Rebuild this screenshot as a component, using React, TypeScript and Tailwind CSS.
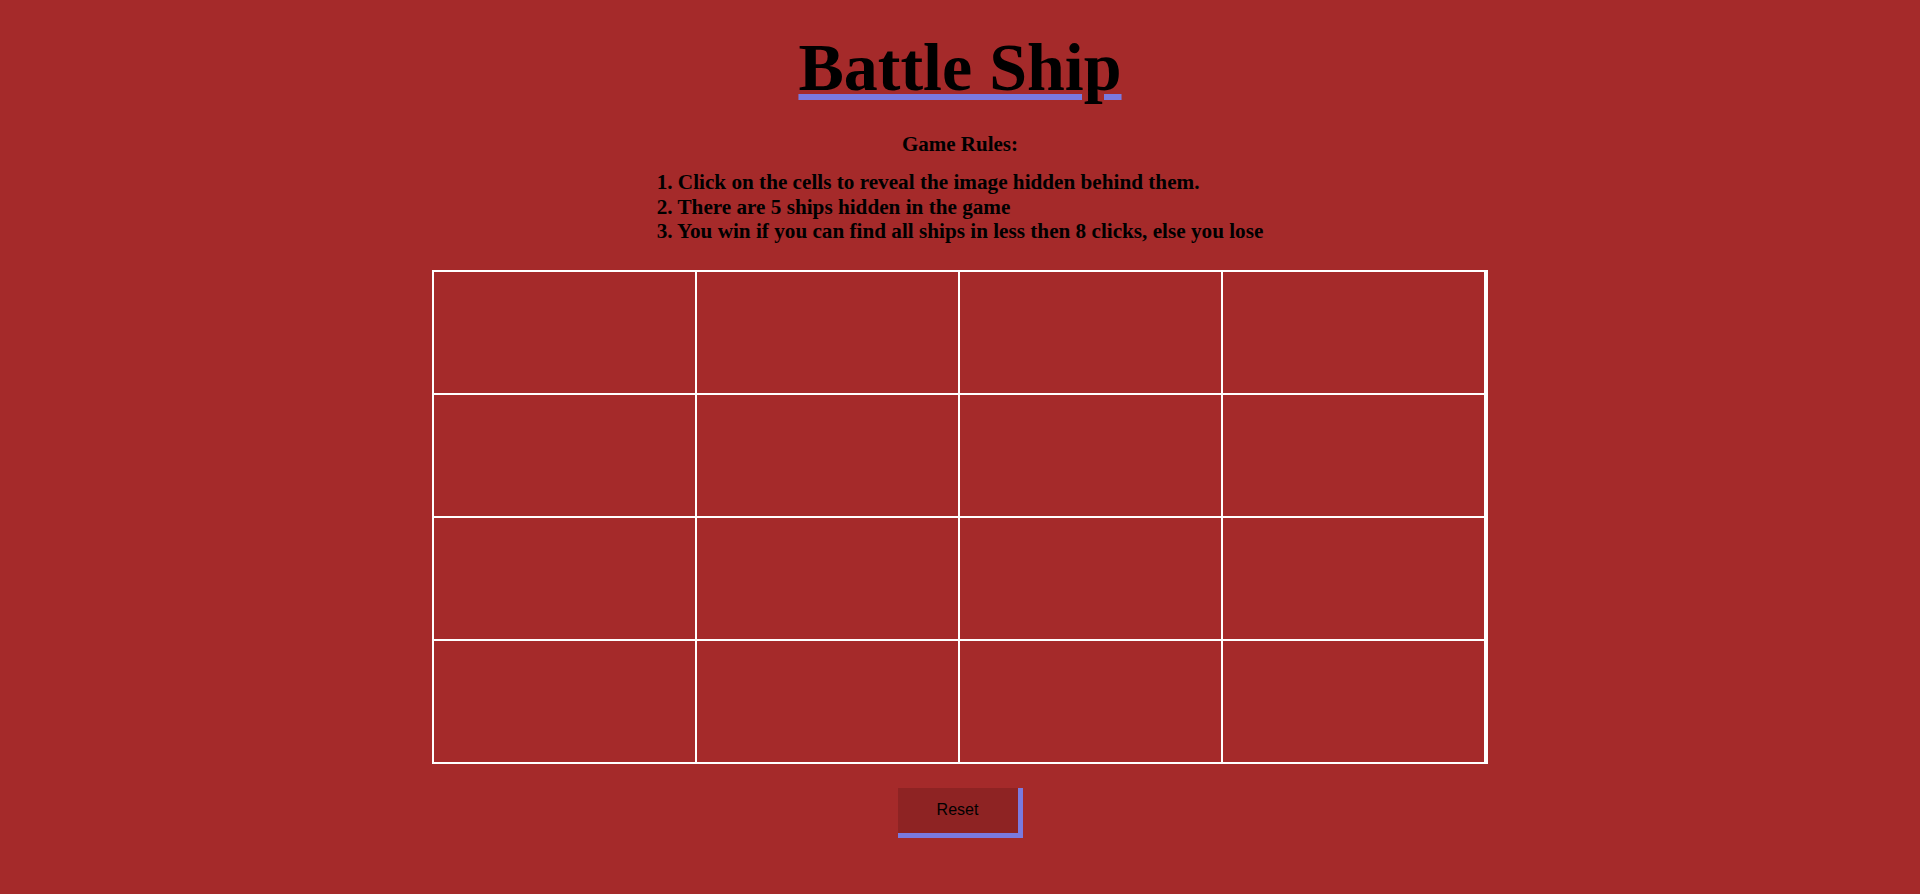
import React from "react";

export default function App() {
  const cells = Array.from({ length: 16 }, (_, i) => i);
  return (
    <div className="min-h-screen bg-[#a52a2a] font-['Liberation_Serif',serif] text-black flex flex-col items-center">
      <h1 className="mt-[28px] text-[68px] leading-[78px] font-bold underline decoration-[#7a7adf] decoration-[length:6px] underline-offset-[4px]">
        Battle Ship
      </h1>
      <h3 className="mt-[26px] text-[21px] leading-[24.5px] font-bold">Game Rules:</h3>
      <ol className="mt-[13.5px] text-[21.2px] leading-[24.5px] font-bold text-left">
        <li>1. Click on the cells to reveal the image hidden behind them.</li>
        <li>2. There are 5 ships hidden in the game</li>
        <li>3. You win if you can find all ships in less then 8 clicks, else you lose</li>
      </ol>
      <div className="mt-[26px] w-[1056px] grid grid-cols-4 border-l-2 border-t-2 border-r-2 border-white">
        {cells.map((i) => (
          <div key={i} className="h-[123px] border-r-2 border-b-2 border-white cursor-pointer" />
        ))}
      </div>
      <button className="mt-[24px] w-[125px] h-[50px] bg-[#8e2323] border-r-[5px] border-b-[5px] border-[#7a7adf] font-['Liberation_Sans',Arial,sans-serif] text-[16px] text-black flex items-center justify-center">
        Reset
      </button>
    </div>
  );
}
